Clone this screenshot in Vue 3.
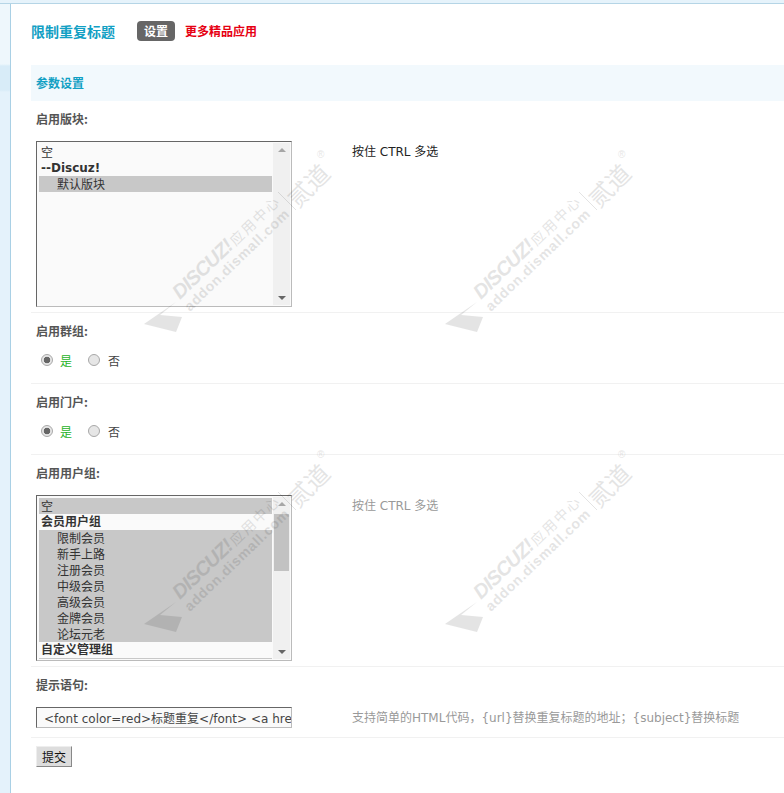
<template>
  <div class="page">
    <div class="topbar"></div>
    <div class="wrap">
      <aside class="side"></aside>
      <main class="main">
        <div class="head">
          <h1 class="title">限制重复标题</h1>
          <a class="badge">设置</a>
          <a class="more">更多精品应用</a>
        </div>

        <h2 class="section">参数设置</h2>

        <div class="label">启用版块:</div>
        <div class="row">
          <div class="listbox">
            <div class="options">
              <div class="opt">空</div>
              <div class="opt group">--Discuz!</div>
              <div class="opt sub sel">默认版块</div>
            </div>
            <div class="scroll">
              <span class="arrow up"></span>
              <span class="arrow down"></span>
            </div>
          </div>
          <div class="tip dark">按住 CTRL 多选</div>
        </div>

        <div class="label">启用群组:</div>
        <div class="row radios">
          <span class="radio on"></span><span class="yes">是</span>
          <span class="radio"></span><span class="no">否</span>
        </div>

        <div class="label">启用门户:</div>
        <div class="row radios">
          <span class="radio on"></span><span class="yes">是</span>
          <span class="radio"></span><span class="no">否</span>
        </div>

        <div class="label">启用用户组:</div>
        <div class="row">
          <div class="listbox">
            <div class="options">
              <div
                v-for="item in groups"
                :key="item.name"
                class="opt"
                :class="{ group: item.group, sub: !item.group, sel: item.sel }"
              >{{ item.name }}</div>
              <div class="cut"></div>
            </div>
            <div class="scroll">
              <span class="arrow up"></span>
              <span class="thumb"></span>
              <span class="arrow down"></span>
            </div>
          </div>
          <div class="tip">按住 CTRL 多选</div>
        </div>

        <div class="label">提示语句:</div>
        <div class="row short">
          <input class="textbox" readonly value='&lt;font color=red&gt;标题重复&lt;/font&gt; &lt;a href="{url}"&gt;' />
          <div class="tip">支持简单的HTML代码，{url}替换重复标题的地址；{subject}替换标题</div>
        </div>

        <button class="submit" type="button">提交</button>
      </main>
    </div>

    <!-- watermarks lie over the form -->
    <svg
      v-for="mark in marks"
      :key="mark.id"
      class="mark"
      :style="{ left: mark.x + 'px', top: mark.y + 'px' }"
      width="204"
      height="190"
      viewBox="0 0 204 190"
    >
      <path d="M1 176 L33 154 L17 167 L39 169 L33 184 Z" fill="#000" />
      <g transform="translate(37 152) rotate(-44)">
        <text class="m-big" textLength="76">DISCUZ!</text>
        <text class="m-cn" x="77" textLength="62">应用中心</text>
      </g>
      <text class="m-url" transform="translate(47 164) rotate(-44)" textLength="139">addon.dismall.com</text>
      <path d="M135 44 L153 62" stroke="#000" stroke-width="1" />
      <text class="m-logo" transform="translate(155 61) rotate(-45)">贰道</text>
      <text class="m-reg" x="174" y="10">®</text>
    </svg>
  </div>
</template>

<script setup>
const groups = [
  { name: '空', group: false, sel: true },
  { name: '会员用户组', group: true },
  { name: '限制会员', sel: true },
  { name: '新手上路', sel: true },
  { name: '注册会员', sel: true },
  { name: '中级会员', sel: true },
  { name: '高级会员', sel: true },
  { name: '金牌会员', sel: true },
  { name: '论坛元老', sel: true },
  { name: '自定义管理组', group: true },
]

const marks = [
  { id: 1, x: 143, y: 148 },
  { id: 2, x: 444, y: 148 },
  { id: 3, x: 143, y: 448 },
  { id: 4, x: 444, y: 448 },
]
</script>

<style>
html,
body {
  margin: 0;
  background: #fff;
}
</style>

<style scoped>
.page {
  position: relative;
  width: 784px;
  height: 793px;
  overflow: hidden;
  background: #fff;
  font: 12px "Noto Sans CJK SC", sans-serif;
  color: #333;
}

.topbar {
  height: 3px;
  background: #e6f3fb;
  border-bottom: 1px solid #b5d5e6;
}

.wrap {
  display: flex;
  height: 789px;
}

.side {
  width: 10px;
  flex: none;
  border-right: 1px solid #a9d0e5;
  background: linear-gradient(180deg, #eef7fc 0, #eef7fc 60px, #d8ecf8 62px, #d8ecf8 86px, #e4f2fb 88px, #e4f2fb 100%);
}

.main {
  flex: 1;
  min-width: 0;
  padding: 0 0 0 20px;
}

.head {
  box-sizing: border-box;
  display: flex;
  align-items: center;
  height: 61px;
  padding-bottom: 8px;
}

.title {
  margin: 0 22px 0 0;
  font-size: 14px;
  font-weight: 700;
  color: #12a0c4;
}

.badge {
  width: 38px;
  height: 20px;
  line-height: 20px;
  margin-right: 10px;
  border-radius: 4px;
  background: #666;
  color: #fff;
  font-weight: 700;
  text-align: center;
}

.more {
  color: #e60012;
  font-weight: 700;
}

.section {
  margin: 0;
  height: 36px;
  line-height: 36px;
  padding-left: 5px;
  background: #f2f9fd;
  font-size: 12px;
  font-weight: 700;
  color: #12a0c4;
}

.label {
  height: 18px;
  line-height: 18px;
  padding: 9px 0 0 5px;
  font-weight: 700;
  color: #555;
}

.row {
  display: flex;
  align-items: flex-start;
  margin-top: 13px;
  padding: 0 0 5px 5px;
  border-bottom: 1px solid #f1f1f1;
}

.listbox {
  display: flex;
  box-sizing: border-box;
  width: 256px;
  height: 166px;
  padding: 1px;
  border: 1px solid #bbb;
  border-top-color: #666;
  border-left-color: #666;
  background: #fafafa;
}

.options {
  position: relative;
  flex: 1;
  overflow: hidden;
  padding: 1px 1px 0;
}

.opt {
  height: 16px;
  line-height: 16px;
  padding-left: 2px;
  color: #333;
  white-space: nowrap;
}

.group {
  font-weight: 700;
  font-family: "DejaVu Sans", "Noto Sans CJK SC", sans-serif;
  font-size: 12px;
  color: #333;
}

.sub {
  padding-left: 18px;
}

.opt:first-child {
  padding-left: 2px;
}

.sel {
  background: #c8c8c8;
}

.cut {
  height: 3px;
  background: #c8c8c8;
}

.scroll {
  position: relative;
  display: flex;
  flex-direction: column;
  align-items: center;
  justify-content: space-between;
  width: 17px;
  background: #f0f0f0;
  padding: 5px 0;
  box-sizing: border-box;
}

.arrow {
  width: 0;
  height: 0;
  border-left: 4px solid transparent;
  border-right: 4px solid transparent;
}

.up {
  border-bottom: 4px solid #a6a6a6;
}

.down {
  border-top: 4px solid #666;
}

.thumb {
  position: absolute;
  top: 17px;
  left: 1px;
  width: 15px;
  height: 57px;
  background: #c2c2c2;
}

.tip {
  margin: 3px 0 0 60px;
  color: #999;
  line-height: 16px;
  font-family: "DejaVu Sans", "Noto Sans CJK SC", sans-serif;
}

.tip.dark {
  color: #222;
}

.radios {
  align-items: center;
  height: 18px;
  margin-top: 11px;
  padding: 0 0 14px 10px;
}

.radio {
  box-sizing: border-box;
  width: 12px;
  height: 12px;
  border: 1px solid #a8a8a8;
  border-radius: 50%;
  background: #e6e6e6;
}

.radio.on {
  background: radial-gradient(circle, #666 0, #666 3px, #e6e6e6 3.6px);
}

.yes {
  margin: 0 16px 0 7px;
  color: #1fb31f;
}

.no {
  margin-left: 8px;
  color: #444;
}

.short {
  padding-bottom: 9px;
}

.textbox {
  box-sizing: border-box;
  width: 256px;
  height: 21px;
  padding: 0 0 0 7px;
  border: 1px solid #bbb;
  border-top-color: #666;
  border-left-color: #666;
  border-radius: 0;
  outline: none;
  background: #fafafa;
  font: 12px "DejaVu Sans", "Noto Sans CJK SC", sans-serif;
  color: #444;
}

.submit {
  display: block;
  box-sizing: border-box;
  width: 36px;
  height: 21px;
  margin: 8px 0 0 5px;
  padding: 0;
  border: 1px solid #888;
  border-top-color: #eee;
  border-left-color: #eee;
  background: #ddd;
  font: 12px "Noto Sans CJK SC", sans-serif;
  color: #111;
}

.mark {
  position: absolute;
  opacity: 0.1;
  pointer-events: none;
}

.m-big {
  font: italic 700 20px "Liberation Sans", sans-serif;
}

.m-cn {
  font: 14px "Noto Sans CJK SC", sans-serif;
}

.m-url {
  font: 700 14px "Liberation Sans", sans-serif;
}

.m-logo {
  font: 24px "Noto Sans CJK SC", sans-serif;
}

.m-reg {
  font: 10px "Liberation Sans", sans-serif;
}
</style>
